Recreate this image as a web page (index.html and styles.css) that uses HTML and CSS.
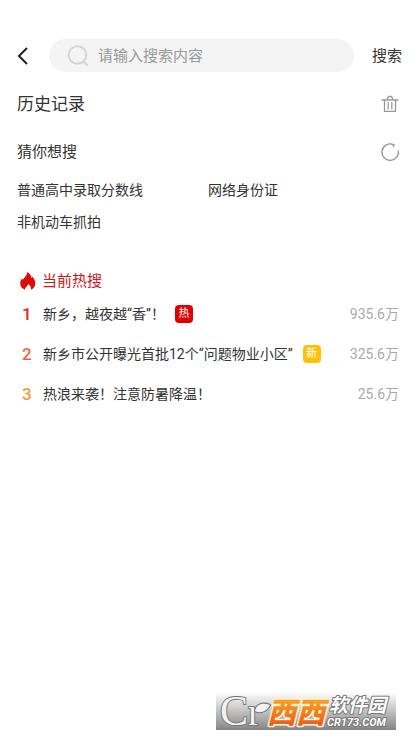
FILE: index.html
```html
<!DOCTYPE html>
<html lang="zh-CN">
<head>
<meta charset="utf-8">
<meta name="viewport" content="width=device-width, initial-scale=1">
<title>搜索</title>
<link rel="stylesheet" href="styles.css">
</head>
<body>
<div class="page">
  <header>
    <form class="search-bar" role="search">
      <button class="icon-button back" type="button" aria-label="返回">
        <svg width="12" height="20" viewBox="0 0 12 20" fill="none" stroke="#222" stroke-width="2"><path d="M10 2 2 10l8 8"/></svg>
      </button>
      <label class="search-box">
        <svg width="22" height="22" viewBox="0 0 22 22" fill="none" stroke="#d6d6d6" stroke-width="2"><circle cx="10.500" cy="10" r="8.800"/><path d="m16 16 4.500 4.500" stroke-width="2.400"/></svg>
        <input class="search-input" type="search" aria-label="搜索内容" placeholder="请输入搜索内容">
      </label>
      <button class="submit" type="submit">搜索</button>
    </form>
  </header>
  <main>
    <section class="history">
      <h1 class="history-title">历史记录</h1>
      <button class="icon-button" type="button" aria-label="清空历史记录">
        <svg width="18" height="18" viewBox="0 0 18 18" fill="none" stroke="#999" stroke-width="1.300"><path d="M.5 5h17M3.500 5v11.400h11V5M7.200 7v7.500M10.800 7v7.500M6.500 4.500V3L8 1.500h2L11.500 3v1.500"/></svg>
      </button>
    </section>
    <section class="guess">
      <div class="guess-head">
        <h2 class="guess-title">猜你想搜</h2>
        <button class="icon-button" type="button" aria-label="换一批">
          <svg width="18" height="18" viewBox="0 0 18 18" fill="none" stroke="#999" stroke-width="1.400"><path d="M17.200 7.500A8.200 8.200 0 1 1 12.800 1.800M9.500.8l3.600 1-1.400 2"/></svg>
        </button>
      </div>
      <div class="guess-list">
        <a class="guess-link" href="#">普通高中录取分数线</a>
        <a class="guess-link" href="#">网络身份证</a>
        <a class="guess-link" href="#">非机动车抓拍</a>
      </div>
    </section>
    <section>
      <h2 class="hot-title">
        <svg width="16" height="18" viewBox="0 0 16 18" fill="#d90b0b"><path d="M7 0c3 1.500 4.500 4 4.500 6 .6-.3.900-.8 1-1.500 2 2.500 3 5 2.800 7.500-.2 2.600-1.700 4.500-4.300 5.700.2-2.700-.8-4.200-2.900-5.700-.2 1.200-.7 1.800-1.500 2.500-1 .9-1.600 1.900-1.400 3.200C2.300 16.700.2 14.500.2 11.700.2 9.500 1 8 2 6.500c.5.3.8.7 1 1.200C4 5.500 7.500 3.500 7 0z"/></svg>
        当前热搜
      </h2>
      <ol class="hot-list">
        <li class="hot-item"><span class="rank rank-first">1</span><a class="topic" href="#">新乡，越夜越“香”！</a><span class="badge badge-hot">热</span><span class="count">935.6万</span></li>
        <li class="hot-item"><span class="rank rank-second">2</span><a class="topic" href="#">新乡市公开曝光首批12个“问题物业小区”</a><span class="badge badge-new">新</span><span class="count">325.6万</span></li>
        <li class="hot-item"><span class="rank rank-third">3</span><a class="topic" href="#">热浪来袭！注意防暑降温！</a><span class="count">25.6万</span></li>
      </ol>
    </section>
  </main>
  <footer class="site-mark">
    <svg class="mark" width="180" height="38" viewBox="0 0 180 38" role="img" aria-label="西西软件园 CR173.COM">
      <defs>
        <linearGradient id="orange" x1="0" y1="0" x2="0" y2="1"><stop offset="0" stop-color="#f8ae27"/><stop offset="1" stop-color="#e94e12"/></linearGradient>
      </defs>
      <g class="mark-logo">
        <text x="4" y="33" font-size="42">C</text>
        <text x="32" y="33" font-size="38">r</text>
        <path d="M39 19c1-7 8-9 15-6-3 6-9 9-15 6z"/>
      </g>
      <g class="mark-orange"><text x="51" y="31" font-size="29">西西</text></g>
      <g class="mark-name"><text x="113" y="20" font-size="19">软件园</text></g>
      <g class="mark-domain"><text x="111" y="34" font-size="11">CR173.COM</text></g>
    </svg>
  </footer>
</div>
</body>
</html>
```

FILE: styles.css
```css
* {
  box-sizing: border-box;
}

body {
  margin: 0;
  background: #fff;
  color: #333;
  font-family: Roboto, "Noto Sans CJK SC", sans-serif;
  font-size: 14px;
  line-height: 20px;
}

h1,
h2 {
  margin: 0;
  font-weight: 400;
}

a {
  color: inherit;
  text-decoration: none;
}

button,
input {
  padding: 0;
  border: 0;
  background: none;
  color: inherit;
  font: inherit;
}

svg {
  display: block;
  flex: none;
}

.page {
  display: flex;
  flex-direction: column;
  min-height: 100vh;
  padding: 39px 0 10px;
}

main {
  padding: 0 17px;
}

.search-bar {
  display: flex;
  align-items: center;
  padding: 0 14px 0 17px;
  font-size: 15px;
}

.back {
  width: 32px;
}

.search-box {
  display: flex;
  flex: 1;
  align-items: center;
  gap: 9px;
  min-width: 0;
  height: 33px;
  padding: 0 18px;
  border-radius: 17px;
  background: #f4f4f4;
}

.search-input {
  flex: 1;
  min-width: 0;
  outline: none;
  appearance: none;
}

.search-input::placeholder {
  color: #999;
  opacity: 1;
}

.submit {
  margin-left: 18px;
}

.history,
.guess-head {
  display: flex;
  align-items: center;
  justify-content: space-between;
}

.history {
  height: 64px;
}

.history-title {
  font-size: 17px;
}

.guess-head {
  height: 32px;
}

.guess-title,
.hot-title {
  font-size: 15px;
}

.guess-list {
  display: grid;
  grid-template-columns: 1fr 1fr;
  padding-top: 6px;
}

.guess-link {
  line-height: 32px;
}

.hot-title {
  display: flex;
  align-items: center;
  gap: 6px;
  height: 26px;
  margin-top: 30px;
  padding-left: 3px;
  color: #d0161b;
}

.hot-list {
  margin: 0;
  padding: 0;
  list-style: none;
}

.hot-item {
  display: flex;
  align-items: center;
  height: 40px;
}

.rank {
  width: 26px;
  padding-left: 5px;
  font-size: 17px;
  font-weight: 500;
}

.rank-first {
  color: #dc2626;
}

.rank-second {
  color: #f0623c;
}

.rank-third {
  color: #f09a3c;
}

.badge {
  width: 18px;
  height: 18px;
  margin-left: 10px;
  border-radius: 4px;
  color: #fff;
  font-size: 11px;
  line-height: 18px;
  text-align: center;
}

.badge-hot {
  background: #e00000;
}

.badge-new {
  background: #ffc107;
}

.count {
  margin-left: auto;
  color: #aaa;
}

.site-mark {
  align-self: flex-end;
  margin: auto 20px 0 0;
  background: linear-gradient(#fff, #858585);
}

.mark {
  overflow: visible;
}

.mark-logo,
.mark-orange,
.mark-name,
.mark-domain {
  paint-order: stroke;
  stroke-linejoin: round;
}

.mark-logo {
  fill: #f2f2f2;
  stroke: #777;
  stroke-width: 2px;
  font-family: "Liberation Serif", serif;
}

.mark-orange {
  fill: url(#orange);
  stroke: #fff3dc;
  stroke-width: 3px;
  font-style: italic;
  font-weight: 900;
}

.mark-name,
.mark-domain {
  fill: #fff;
  stroke: #777;
  stroke-width: 2px;
  font-style: italic;
  font-weight: 700;
}
```
